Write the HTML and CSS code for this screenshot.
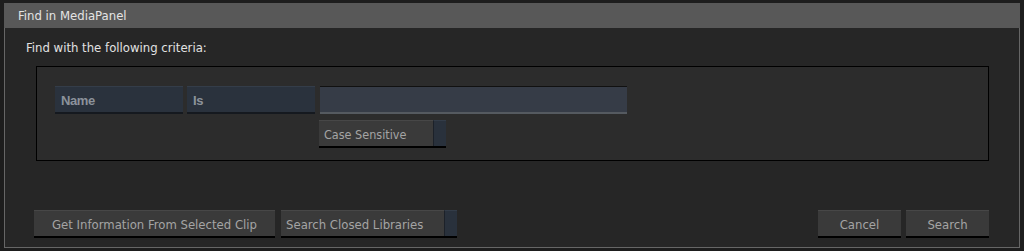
FILE: index.html
```html
<!DOCTYPE html>
<html lang="en">
<head>
    <meta charset="UTF-8">
    <title>Find in MediaPanel</title>
    <link rel="stylesheet" href="styles.css">
</head>
<body>

<div class="dialog">
    <div class="title-bar">Find in MediaPanel</div>
    <div class="dialog-body">
        <p class="caption">Find with the following criteria:</p>

        <div class="criteria">
            <div class="row">
                <div class="field">Name</div>
                <div class="field">Is</div>
                <input type="text" class="text-input">
            </div>
            <div class="row row-sub">
                <div class="toggle">
                    <span class="toggle-label">Case Sensitive</span>
                    <span class="toggle-tab"></span>
                </div>
            </div>
        </div>

        <div class="footer">
            <button class="btn btn-wide">Get Information From Selected Clip</button>
            <div class="toggle toggle-footer">
                <span class="toggle-label">Search Closed Libraries</span>
                <span class="toggle-tab"></span>
            </div>
            <div class="spacer"></div>
            <button class="btn btn-small">Cancel</button>
            <button class="btn btn-small">Search</button>
        </div>
    </div>
</div>
<div class="under"></div>

</body>
</html>
```

FILE: styles.css
```css
body {
    margin: 0;
    background-color: #1d1d1d;
    font-family: "DejaVu Sans Condensed", "DejaVu Sans", sans-serif;
    font-size: 12px;
    height: 251px;
    overflow: hidden;
}

.dialog {
    margin: 3px 0 0 4px;
    width: 1016px;
    height: 245px;
    box-sizing: border-box;
    border: 1px solid #666;
    border-top: none;
    background-color: #262626;
    display: flex;
    flex-direction: column;
}

.title-bar {
    height: 25px;
    margin: 0 -1px;
    padding-left: 14px;
    background-color: #585858;
    color: #e4e4e4;
    font-size: 13px;
    line-height: 26px;
}

.dialog-body {
    flex: 1;
    display: flex;
    flex-direction: column;
}

.caption {
    margin: 11px 0 0 21px;
    color: #e2e2e2;
    font-size: 13px;
    line-height: 18px;
}

.criteria {
    margin: 9px 0 0 31px;
    width: 953px;
    height: 95px;
    box-sizing: border-box;
    border: 1px solid #000;
    background-color: #2c2c2c;
    padding: 19px 0 0 18px;
}

.row {
    display: flex;
    gap: 4px;
}

.row-sub {
    margin: 6px 0 0 264px;
}

.field {
    width: 128px;
    height: 28px;
    box-sizing: border-box;
    background-color: #2a323d;
    border-top: 1px solid #343d49;
    border-bottom: 2px solid #15191f;
    color: #8c929b;
    font-family: "Liberation Sans", Arial, sans-serif;
    font-weight: bold;
    font-size: 13px;
    line-height: 27px;
    padding-left: 6px;
    letter-spacing: -0.4px;
}

.text-input {
    width: 307px;
    height: 28px;
    margin: 0 0 0 1px;
    box-sizing: border-box;
    border: none;
    border-top: 1px solid #111;
    border-bottom: 2px solid #555a60;
    background-color: #363c47;
    outline: none;
    padding: 0 6px;
}

.toggle {
    display: flex;
    height: 28px;
    box-sizing: border-box;
    border-bottom: 2px solid #000;
}

.toggle-label {
    width: 114px;
    background-color: #3a3a3a;
    border-top: 1px solid #474747;
    color: #a4a4a4;
    font-size: 12.5px;
    line-height: 27px;
    padding-left: 5px;
    box-sizing: border-box;
}

.toggle-tab {
    width: 13px;
    background-color: #29313c;
    border-top: 1px solid #333c48;
    border-left: 1px solid #1c2129;
    box-sizing: border-box;
}

.footer {
    margin: auto 0 9px 29px;
    display: flex;
    gap: 6px;
    padding-right: 30px;
}

.btn {
    height: 28px;
    box-sizing: border-box;
    background-color: #3a3a3a;
    border: none;
    border-top: 1px solid #474747;
    border-bottom: 2px solid #000;
    color: #a4a4a4;
    font-family: inherit;
    font-size: 13px;
    line-height: 25px;
    padding: 1px 0 0;
}

.btn-wide {
    width: 241px;
}

.toggle-footer .toggle-label {
    width: 163px;
    font-size: 13px;
}

.spacer {
    flex: 1;
}

.btn-small {
    width: 83px;
    margin-left: -1px;
}

.under {
    height: 3px;
}
```
